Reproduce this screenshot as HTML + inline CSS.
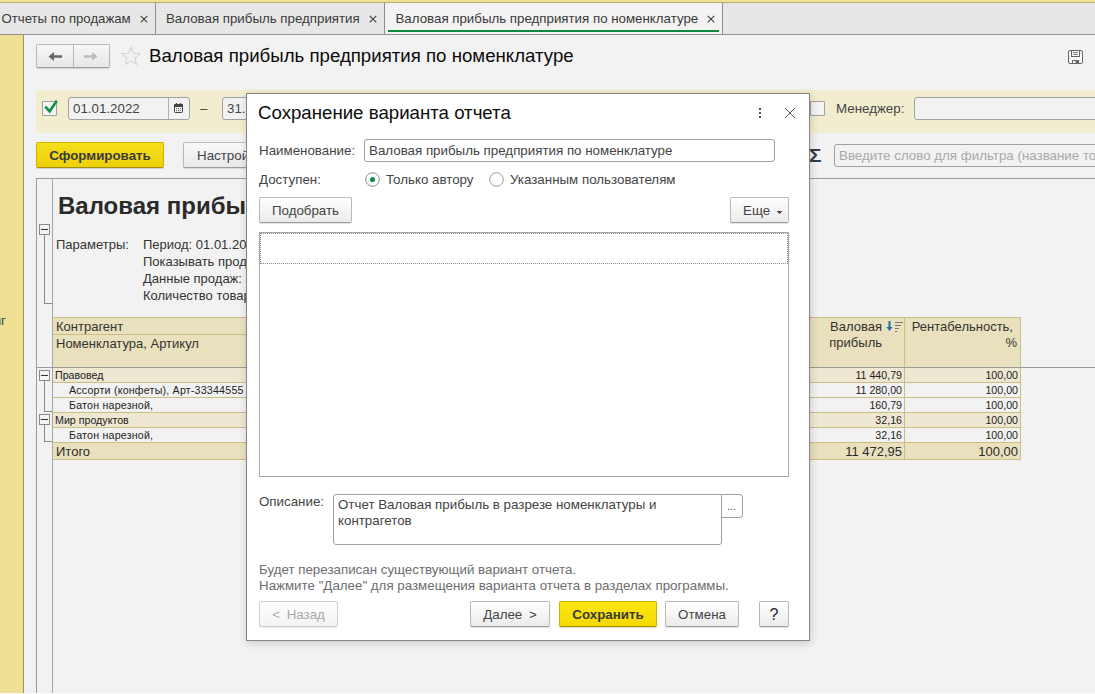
<!DOCTYPE html>
<html lang="ru">
<head>
<meta charset="utf-8">
<title>Валовая прибыль предприятия по номенклатуре</title>
<style>
html,body{margin:0;padding:0;}
body{width:1095px;height:694px;overflow:hidden;position:relative;background:#f2f2f2;font-family:"Liberation Sans",Arial,sans-serif;font-size:13.33px;color:#2b2b2b;}
.abs{position:absolute;white-space:nowrap;}
#topstrip{left:0;top:0;width:1095px;height:3px;background:linear-gradient(#f0e096 0,#f0e096 2px,#b9ac72 2px,#b9ac72 3px);}
#tabbar{left:0;top:3px;width:1095px;height:31px;background:#e7e7e7;border-bottom:1px solid #8f8f8f;}
#sidebar{left:0;top:35px;width:23px;height:659px;background:#f0e094;border-right:1px solid #9a9060;}
.tab{top:3px;height:31px;line-height:31px;font-size:13.3px;color:#3a3a3a;}
.tabsep{top:3px;width:1px;height:31px;background:#8f8f8f;}
.tx{font-size:15px;color:#555;}
.btn{box-sizing:border-box;padding-top:1px;border:1px solid #b9b9b9;border-bottom-color:#9c9c9c;border-radius:2px;background:linear-gradient(#ffffff,#ebebeb);text-align:center;color:#444;box-shadow:0 1px 1px rgba(0,0,0,0.12);}
.ybtn{box-sizing:border-box;padding-top:1px;border:1px solid #cdb400;border-bottom-color:#a48f00;border-radius:2px;background:linear-gradient(#f5de1a,#edd00a);text-align:center;color:#3a3a3a;font-weight:bold;box-shadow:0 1px 1px rgba(0,0,0,0.15);}
.inp{box-sizing:border-box;border:1px solid #a0a0a0;border-radius:3px;background:#f2f2f2;}
.cell{box-sizing:border-box;border-right:1px solid #cbbd84;border-bottom:1px solid #cbbd84;}
.hdr{background:#e9e0bd;}
.grp{background:#eee8d2;}
.small{font-size:10.67px;color:#222;}
</style>
</head>
<body>
<div id="topstrip" class="abs"></div>
<div id="tabbar" class="abs"></div>
<div id="sidebar" class="abs"></div>
<!-- tabs -->
<div class="abs tab" style="left:1.5px;font-size:13.2px;">Отчеты по продажам</div>
<svg class="abs" style="left:140px;top:14px;" width="9" height="9" viewBox="0 0 9 9"><path d="M0.7 1.8 L7.3 8.4 M7.3 1.8 L0.7 8.4" stroke="#444" stroke-width="1.2" fill="none"/></svg>
<div class="abs tabsep" style="left:155px;"></div>
<div class="abs tab" style="left:166px;">Валовая прибыль предприятия</div>
<svg class="abs" style="left:369px;top:14px;" width="9" height="9" viewBox="0 0 9 9"><path d="M0.7 1.8 L7.3 8.4 M7.3 1.8 L0.7 8.4" stroke="#444" stroke-width="1.2" fill="none"/></svg>
<div class="abs tabsep" style="left:384px;"></div>
<div class="abs" style="left:385px;top:3px;width:337px;height:31px;background:#f3f3f3;"></div>
<div class="abs tab" style="left:395.5px;">Валовая прибыль предприятия по номенклатуре</div>
<svg class="abs" style="left:707px;top:14px;" width="9" height="9" viewBox="0 0 9 9"><path d="M0.7 1.8 L7.3 8.4 M7.3 1.8 L0.7 8.4" stroke="#444" stroke-width="1.2" fill="none"/></svg>
<div class="abs" style="left:388px;top:30px;width:331px;height:2px;background:#0b8a3c;"></div>
<div class="abs tabsep" style="left:722px;"></div>

<!-- toolbar: nav buttons, star, title -->
<div class="abs btn" style="left:36px;top:44px;width:38px;height:24px;border-radius:2px 0 0 2px;background:linear-gradient(#f7f7f7,#e7e7e7);"></div>
<div class="abs btn" style="left:73px;top:44px;width:37px;height:24px;border-radius:0 2px 2px 0;background:linear-gradient(#f7f7f7,#e7e7e7);"></div>
<svg class="abs" style="left:36px;top:43.5px;" width="74" height="25" viewBox="0 0 74 25">
  <path d="M12.5 12.5 L18 8 L18 11.3 L26 11.3 L26 13.7 L18 13.7 L18 17 Z" fill="#666"/>
  <path d="M61.5 12.5 L56 8 L56 11.3 L48 11.3 L48 13.7 L56 13.7 L56 17 Z" fill="#bdbdbd"/>
</svg>
<svg class="abs" style="left:120px;top:45px;" width="22" height="22" viewBox="0 0 22 22">
  <path d="M11 2.2 L13.5 8.3 L20 8.8 L15 13 L16.6 19.4 L11 15.9 L5.4 19.4 L7 13 L2 8.8 L8.5 8.3 Z" fill="none" stroke="#d4d4d4" stroke-width="1.1" stroke-linejoin="miter"/>
</svg>
<div class="abs" style="left:149px;top:44px;font-size:18.67px;line-height:24px;color:#0c0c0c;">Валовая прибыль предприятия по номенклатуре</div>
<!-- save icon -->
<svg class="abs" style="left:1068px;top:50px;" width="15" height="14" viewBox="0 0 15 14">
  <rect x="0.5" y="0.5" width="14" height="13" rx="1.5" fill="#fafafa" stroke="#666" stroke-width="1"/>
  <rect x="3.5" y="0.5" width="8" height="6" fill="#fafafa" stroke="#666" stroke-width="1"/>
  <path d="M5.2 2.5 H9.8 M5.2 4.5 H9.8" stroke="#666" stroke-width="0.9"/>
  <rect x="4.5" y="10.5" width="6" height="3" fill="#fafafa" stroke="#666" stroke-width="1"/>
  <rect x="7.6" y="10.5" width="2.9" height="3" fill="#666"/>
</svg>

<!-- filter bar -->
<div class="abs" style="left:36px;top:90px;width:1059px;height:43px;background:#f3edcf;"></div>
<div class="abs" style="left:42px;top:101px;width:15px;height:15px;box-sizing:border-box;border:1px solid #a0a0a0;background:#f4f4f4;border-radius:1px;"></div>
<svg class="abs" style="left:42px;top:98px;" width="18" height="18" viewBox="0 0 18 18"><path d="M3.3 8.6 L7.6 13.4 L14.8 2.8" fill="none" stroke="#0f9147" stroke-width="2.7"/></svg>
<div class="abs inp" style="left:68px;top:97px;width:122px;height:23px;"></div>
<div class="abs" style="left:168px;top:98px;width:1px;height:21px;background:#b0b0b0;"></div>
<div class="abs" style="left:73px;top:97px;line-height:23px;color:#444;">01.01.2022</div>
<svg class="abs" style="left:174px;top:103px;" width="9" height="10" viewBox="0 0 9 10">
  <rect x="0.5" y="1.5" width="8" height="8" rx="0.8" fill="#f6f6f6" stroke="#444" stroke-width="1"/>
  <rect x="0" y="1" width="9" height="3" rx="0.8" fill="#444"/>
  <rect x="1.9" y="0" width="1.3" height="2" rx="0.6" fill="#444"/><rect x="5.8" y="0" width="1.3" height="2" rx="0.6" fill="#444"/>
  <g fill="#444"><circle cx="2.6" cy="5.6" r="0.55"/><circle cx="4.5" cy="5.6" r="0.55"/><circle cx="6.4" cy="5.6" r="0.55"/>
  <circle cx="2.6" cy="7.6" r="0.55"/><circle cx="4.5" cy="7.6" r="0.55"/><circle cx="6.4" cy="7.6" r="0.55"/></g>
</svg>
<div class="abs" style="left:200px;top:97px;line-height:23px;color:#444;">–</div>
<div class="abs inp" style="left:222px;top:97px;width:122px;height:23px;"></div>
<div class="abs" style="left:227px;top:97px;line-height:23px;color:#444;">31.12.2022</div>
<!-- manager -->
<div class="abs" style="left:810px;top:101px;width:15px;height:15px;box-sizing:border-box;border:1px solid #a0a0a0;background:#f4f4f4;border-radius:1px;"></div>
<div class="abs" style="left:836px;top:97px;line-height:23px;color:#444;">Менеджер:</div>
<div class="abs inp" style="left:914px;top:97px;width:200px;height:23px;"></div>

<!-- action row -->
<div class="abs ybtn" style="left:36px;top:142px;width:128px;height:26px;line-height:23px;">Сформировать</div>
<div class="abs btn" style="background:linear-gradient(#f9f9f9,#e8e8e8);left:183px;top:142px;width:120px;height:26px;line-height:23px;text-align:left;padding-left:13px;">Настройки...</div>
<div class="abs" style="left:809px;top:143px;font-size:18.5px;line-height:26px;font-weight:bold;color:#2f3d4c;transform:scaleX(1.12);transform-origin:0 0;">Σ</div>
<div class="abs inp" style="left:834px;top:144px;width:280px;height:23px;"></div>
<div class="abs" style="left:839px;top:144px;line-height:23px;color:#a9a9a9;">Введите слово для фильтра (название товара)</div>

<!-- report area -->
<div class="abs" style="left:36px;top:178px;width:1059px;height:516px;box-sizing:border-box;border-left:1px solid #9a9a9a;border-top:1px solid #9a9a9a;"></div>
<div class="abs" style="left:52px;top:179px;width:1px;height:515px;background:#a6a6a6;"></div>
<div class="abs" style="left:58px;top:192px;font-size:24px;line-height:28px;font-weight:bold;color:#2a2a2a;">Валовая прибыль предприятия по номенклатуре</div>
<div class="abs" style="left:56px;top:236px;line-height:17px;color:#333;font-size:13px;">Параметры:</div>
<div class="abs" style="left:143px;top:236px;line-height:17px;color:#333;white-space:pre;font-size:13px;">Период: 01.01.2022 - 31.12.2022
Показывать продажи: Все
Данные продаж: В валюте упр. учета
Количество товаров: В единицах хранения</div>
<!-- group tree -->
<svg class="abs" style="left:37px;top:220px;" width="16" height="400" viewBox="0 0 16 400" shape-rendering="crispEdges">
  <g fill="none" stroke="#8a8a8a" stroke-width="1">
    <path d="M7.5 15 V83.5 H15"/>
    <path d="M7.5 160 V191.5 H15"/>
    <path d="M7.5 205 V221.5 H15"/>
  </g>
  <g fill="#f4f4f4" stroke="#8a8a8a" stroke-width="1">
    <rect x="2.5" y="4.5" width="10" height="10"/>
    <rect x="2.5" y="150.5" width="10" height="10"/>
    <rect x="2.5" y="194.5" width="10" height="10"/>
  </g>
  <g stroke="#333" stroke-width="1">
    <path d="M4 9.5 H11"/><path d="M4 155.5 H11"/><path d="M4 199.5 H11"/>
  </g>
</svg>
<!-- table header -->
<div class="abs cell hdr" style="left:53px;top:317px;width:756px;height:18px;border-top:1px solid #cbbd84;"></div>
<div class="abs cell hdr" style="left:53px;top:335px;width:756px;height:33px;"></div>
<div class="abs" style="left:56px;top:318px;line-height:17px;color:#333;font-size:13px;">Контрагент</div>
<div class="abs" style="left:56px;top:335px;line-height:17px;color:#333;font-size:13px;">Номенклатура, Артикул</div>
<div class="abs cell hdr" style="left:809px;top:317px;width:96px;height:51px;border-top:1px solid #cbbd84;"></div>
<div class="abs cell hdr" style="left:905px;top:317px;width:116px;height:51px;border-top:1px solid #cbbd84;"></div>
<div class="abs" style="left:809px;top:319px;width:73px;font-size:13px;line-height:16px;text-align:right;color:#333;white-space:normal;">Валовая<br>прибыль</div>
<div class="abs" style="left:905px;top:319px;width:112px;font-size:13px;line-height:16px;text-align:right;color:#333;white-space:normal;"><span style="padding-right:4px">Рентабельность,</span><br>%</div>
<svg class="abs" style="left:886px;top:320px;" width="18" height="13" viewBox="0 0 18 13">
  <path d="M3.5 1 V9" stroke="#1f6fb5" stroke-width="2" fill="none"/><path d="M0.5 7 L3.5 11 L6.5 7 Z" fill="#1f6fb5"/>
  <g stroke="#777" stroke-width="1" shape-rendering="crispEdges"><path d="M9 2.5 H17"/><path d="M9 5.5 H15"/><path d="M9 8.5 H13"/><path d="M9 11.5 H11"/></g>
</svg>
<div class="abs" style="left:37px;top:367px;width:1058px;height:1px;background:#9a9a9a;"></div>
<div class="abs cell grp" style="left:53px;top:368px;width:756px;height:15px;"></div><div class="abs cell grp" style="left:809px;top:368px;width:96px;height:15px;"></div><div class="abs cell grp" style="left:905px;top:368px;width:116px;height:15px;"></div>
<div class="abs small" style="left:55px;top:368px;line-height:14px;">Правовед</div><div class="abs small" style="left:809px;top:368px;width:93px;text-align:right;line-height:14px;">11 440,79</div><div class="abs small" style="left:905px;top:368px;width:113px;text-align:right;line-height:14px;">100,00</div>
<div class="abs cell " style="left:53px;top:383px;width:756px;height:15px;"></div><div class="abs cell " style="left:809px;top:383px;width:96px;height:15px;"></div><div class="abs cell " style="left:905px;top:383px;width:116px;height:15px;"></div>
<div class="abs small" style="letter-spacing:0.2px;left:69px;top:383px;line-height:14px;">Ассорти (конфеты), Арт-33344555</div><div class="abs small" style="left:809px;top:383px;width:93px;text-align:right;line-height:14px;">11 280,00</div><div class="abs small" style="left:905px;top:383px;width:113px;text-align:right;line-height:14px;">100,00</div>
<div class="abs cell " style="left:53px;top:398px;width:756px;height:15px;"></div><div class="abs cell " style="left:809px;top:398px;width:96px;height:15px;"></div><div class="abs cell " style="left:905px;top:398px;width:116px;height:15px;"></div>
<div class="abs small" style="letter-spacing:0.2px;left:69px;top:398px;line-height:14px;">Батон нарезной,</div><div class="abs small" style="left:809px;top:398px;width:93px;text-align:right;line-height:14px;">160,79</div><div class="abs small" style="left:905px;top:398px;width:113px;text-align:right;line-height:14px;">100,00</div>
<div class="abs cell grp" style="left:53px;top:413px;width:756px;height:15px;"></div><div class="abs cell grp" style="left:809px;top:413px;width:96px;height:15px;"></div><div class="abs cell grp" style="left:905px;top:413px;width:116px;height:15px;"></div>
<div class="abs small" style="left:55px;top:413px;line-height:14px;">Мир продуктов</div><div class="abs small" style="left:809px;top:413px;width:93px;text-align:right;line-height:14px;">32,16</div><div class="abs small" style="left:905px;top:413px;width:113px;text-align:right;line-height:14px;">100,00</div>
<div class="abs cell " style="left:53px;top:428px;width:756px;height:15px;"></div><div class="abs cell " style="left:809px;top:428px;width:96px;height:15px;"></div><div class="abs cell " style="left:905px;top:428px;width:116px;height:15px;"></div>
<div class="abs small" style="letter-spacing:0.2px;left:69px;top:428px;line-height:14px;">Батон нарезной,</div><div class="abs small" style="left:809px;top:428px;width:93px;text-align:right;line-height:14px;">32,16</div><div class="abs small" style="left:905px;top:428px;width:113px;text-align:right;line-height:14px;">100,00</div>
<div class="abs cell hdr" style="left:53px;top:443px;width:756px;height:17px;"></div><div class="abs cell hdr" style="left:809px;top:443px;width:96px;height:17px;"></div><div class="abs cell hdr" style="left:905px;top:443px;width:116px;height:17px;"></div>
<div class="abs " style="left:56px;top:444px;line-height:16px;font-size:13px;">Итого</div><div class="abs " style="left:809px;top:444px;width:93px;text-align:right;line-height:16px;font-size:13px;">11 472,95</div><div class="abs " style="left:905px;top:444px;width:113px;text-align:right;line-height:16px;font-size:13px;">100,00</div>
<div class="abs" style="left:-44px;top:313px;width:50px;text-align:right;line-height:16px;color:#444;font-size:13.33px;">миг</div>

<!-- modal dialog -->
<div class="abs" id="dlg" style="left:246px;top:93px;width:564px;height:548px;box-sizing:border-box;background:#fff;border:1px solid #858585;box-shadow:1px 2px 8px rgba(0,0,0,0.17);"></div>
<div class="abs" style="left:258px;top:101px;font-size:18.67px;line-height:24px;color:#0c0c0c;">Сохранение варианта отчета</div>
<svg class="abs" style="left:756px;top:106px;" width="8" height="14" viewBox="0 0 8 14"><rect x="3" y="2" width="2" height="2" fill="#555"/><rect x="3" y="6" width="2" height="2" fill="#555"/><rect x="3" y="10" width="2" height="2" fill="#555"/></svg>
<svg class="abs" style="left:783px;top:106px;" width="14" height="14" viewBox="0 0 14 14"><path d="M2 2 L12 12 M12 2 L2 12" stroke="#555" stroke-width="1" fill="none"/></svg>

<div class="abs" style="left:259px;top:139px;line-height:23px;color:#444;">Наименование:</div>
<div class="abs inp" style="left:364px;top:139px;width:411px;height:23px;background:#fff;"></div>
<div class="abs" style="left:369px;top:139px;line-height:23px;color:#444;">Валовая прибыль предприятия по номенклатуре</div>

<div class="abs" style="left:259px;top:168px;line-height:23px;color:#444;">Доступен:</div>
<svg class="abs" style="left:365px;top:172px;" width="15" height="15" viewBox="0 0 15 15"><circle cx="7.5" cy="7.5" r="6.8" fill="#fff" stroke="#8e8e8e" stroke-width="1"/><circle cx="7.5" cy="7.5" r="2.6" fill="#0f9147"/></svg>
<div class="abs" style="left:386px;top:168px;line-height:23px;color:#444;">Только автору</div>
<svg class="abs" style="left:489px;top:172px;" width="15" height="15" viewBox="0 0 15 15"><circle cx="7.5" cy="7.5" r="6.8" fill="#fff" stroke="#9a9a9a" stroke-width="1"/></svg>
<div class="abs" style="left:510px;top:168px;line-height:23px;color:#444;">Указанным пользователям</div>

<div class="abs btn" style="left:259px;top:197px;width:93px;height:26px;line-height:23px;">Подобрать</div>
<div class="abs btn" style="left:730px;top:197px;width:59px;height:26px;line-height:23px;text-align:left;padding-left:12px;">Еще</div>
<svg class="abs" style="left:776px;top:211px;" width="7" height="4" viewBox="0 0 7 4"><path d="M0.5 0 L6.5 0 L3.5 3.1 Z" fill="#444"/></svg>

<div class="abs" style="left:259px;top:232px;width:530px;height:245px;box-sizing:border-box;border:1px solid #a8a8a8;background:#fff;"></div>
<div class="abs" style="left:260px;top:233px;width:528px;height:31px;box-sizing:border-box;border:1px dotted #8a8a8a;"></div>

<div class="abs" style="left:259px;top:490px;line-height:23px;color:#444;">Описание:</div>
<div class="abs inp" style="left:333px;top:494px;width:389px;height:51px;background:#fff;border-radius:3px 0 3px 3px;"></div>
<div class="abs" style="left:338px;top:497px;line-height:16px;color:#444;white-space:pre;">Отчет Валовая прибыль в разрезе номенклатуры и
контрагетов</div>
<div class="abs" style="left:721px;top:494px;width:22px;height:24px;box-sizing:border-box;border:1px solid #a0a0a0;background:#fff;line-height:22px;font-size:11px;border-radius:0 3px 3px 0;text-align:center;color:#555;padding-right:1px;">...</div>

<div class="abs" style="left:259px;top:562px;line-height:15.5px;color:#6e6e6e;white-space:pre;">Будет перезаписан существующий вариант отчета.
Нажмите "Далее" для размещения варианта отчета в разделах программы.</div>

<div class="abs btn" style="left:259px;top:601px;width:79px;height:26px;line-height:23px;color:#a9a9a9;border-color:#cfcfcf;background:linear-gradient(#fff,#f3f3f3);box-shadow:0 1px 1px rgba(0,0,0,0.08);word-spacing:3px;">&lt; Назад</div>
<div class="abs btn" style="left:470px;top:601px;width:80px;height:26px;line-height:23px;word-spacing:3px;">Далее &gt;</div>
<div class="abs ybtn" style="background:linear-gradient(#fde614,#f5d800);left:559px;top:601px;width:98px;height:26px;line-height:23px;">Сохранить</div>
<div class="abs btn" style="left:665px;top:601px;width:74px;height:26px;line-height:23px;">Отмена</div>
<div class="abs btn" style="left:759px;top:601px;width:30px;height:26px;line-height:23px;font-size:16px;color:#222;">?</div>
<div class="abs" style="left:0;top:693px;width:1095px;height:1px;background:#fbfbfb;"></div>
</body>
</html>
